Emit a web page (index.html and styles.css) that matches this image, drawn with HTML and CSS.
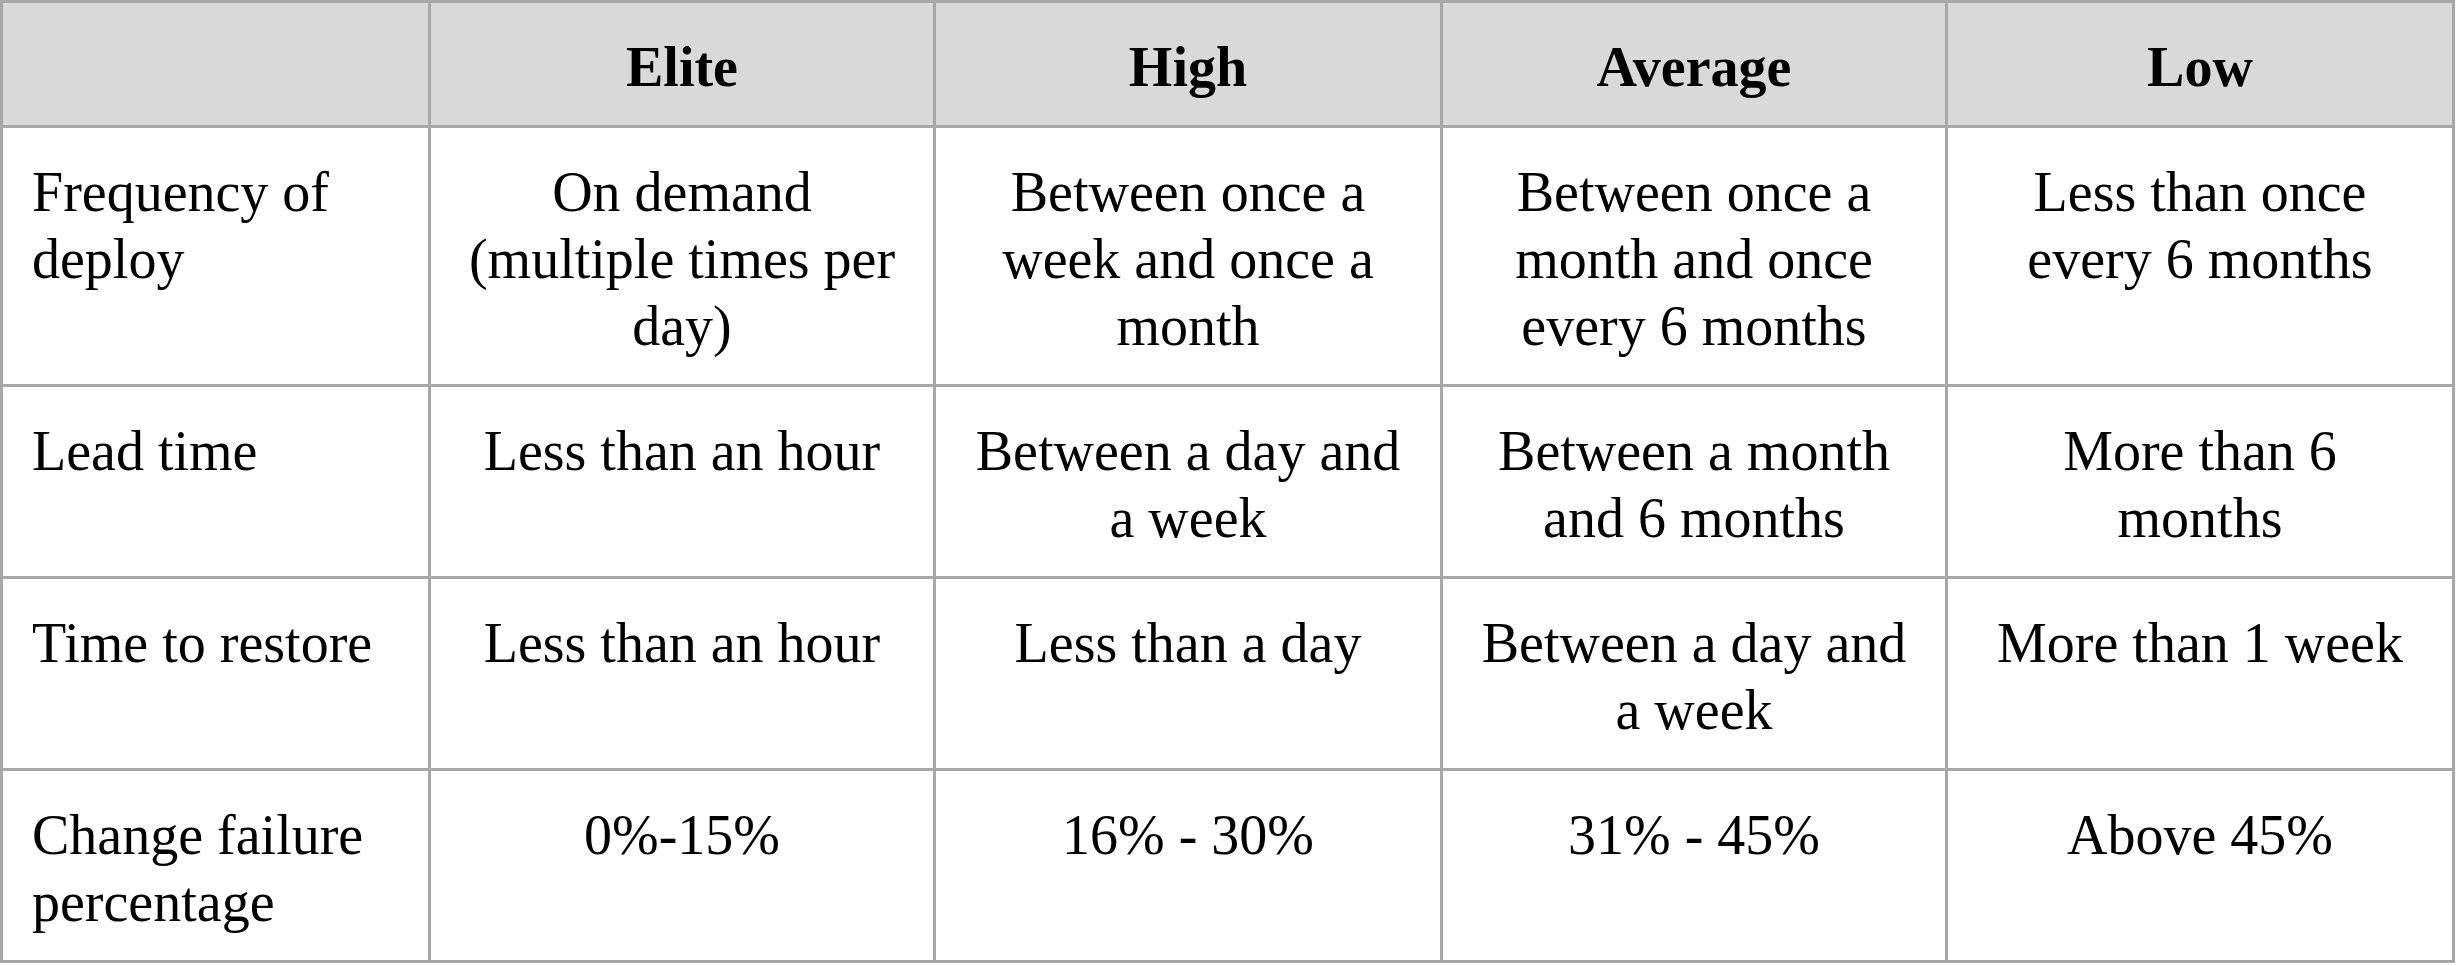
FILE: index.html
```html
<!DOCTYPE html>
<html lang="en">
<head>
<meta charset="utf-8">
<title>Performance table</title>
<link rel="stylesheet" href="styles.css">
</head>
<body>
<div class="table">
  <div class="cell head"></div>
  <div class="cell head">Elite</div>
  <div class="cell head">High</div>
  <div class="cell head">Average</div>
  <div class="cell head">Low</div>

  <div class="cell label">Frequency of deploy</div>
  <div class="cell">On demand (multiple times per day)</div>
  <div class="cell">Between once a week and once a month</div>
  <div class="cell">Between once a month and once every 6 months</div>
  <div class="cell">Less than once every 6 months</div>

  <div class="cell label">Lead time</div>
  <div class="cell">Less than an hour</div>
  <div class="cell">Between a day and a week</div>
  <div class="cell">Between a month and 6 months</div>
  <div class="cell">More than 6 months</div>

  <div class="cell label">Time to restore</div>
  <div class="cell">Less than an hour</div>
  <div class="cell">Less than a day</div>
  <div class="cell">Between a day and a week</div>
  <div class="cell">More than 1 week</div>

  <div class="cell label">Change failure percentage</div>
  <div class="cell">0%-15%</div>
  <div class="cell">16% - 30%</div>
  <div class="cell">31% - 45%</div>
  <div class="cell">Above 45%</div>
</div>
</body>
</html>
```
FILE: styles.css
```css
html, body {
  margin: 0;
  padding: 0;
  background: #ffffff;
}

.table {
  display: grid;
  grid-template-columns: 425px 502px 504px 502px 504px;
  gap: 3px;
  padding: 3px;
  width: max-content;
  background: #a7a7a7;
  font-family: "Liberation Serif", "Times New Roman", serif;
  font-size: 56px;
  line-height: 67px;
  color: #000000;
}

.cell {
  background: #ffffff;
  padding: 31px 29px 24px 29px;
  text-align: center;
}

.cell.head {
  background: #d9d9d9;
  font-weight: bold;
}

.cell.label {
  text-align: left;
}
```
